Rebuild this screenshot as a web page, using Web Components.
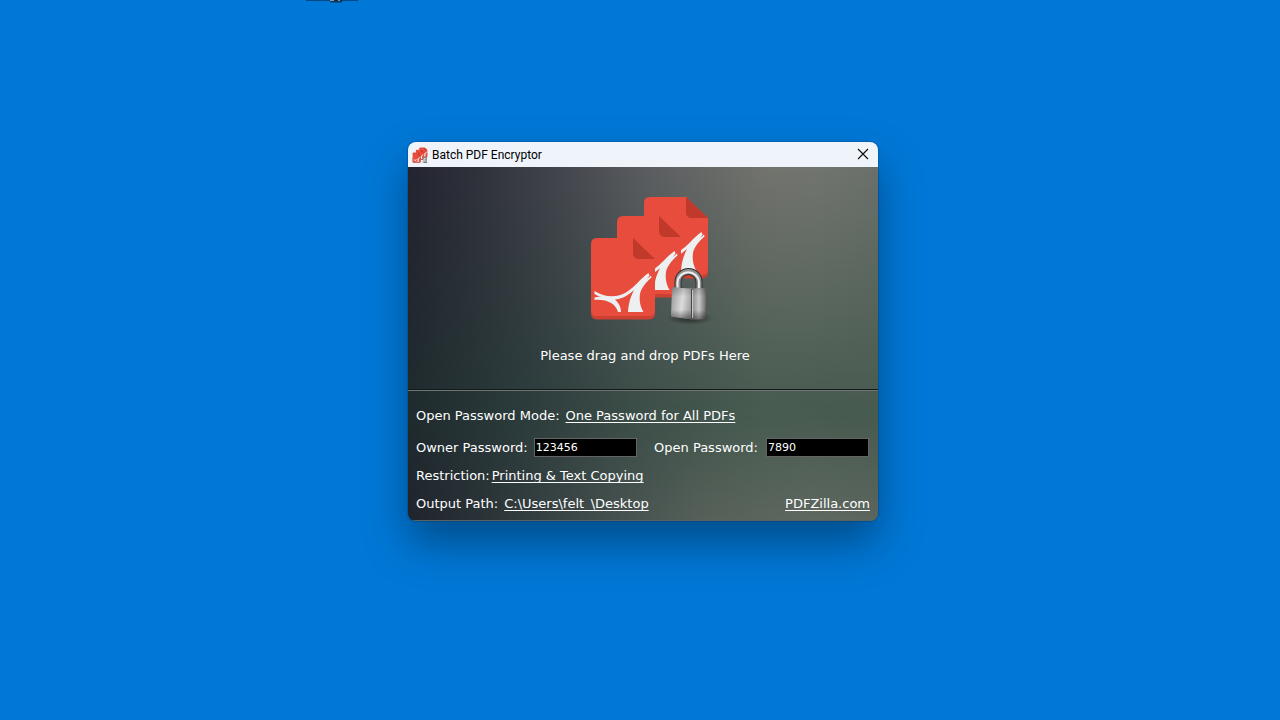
<!DOCTYPE html>
<html lang="en">
<head>
<meta charset="utf-8">
<title>Batch PDF Encryptor</title>
<style>
  html, body { margin: 0; height: 100%; }
  body { background: #0078d7; font-family: "DejaVu Sans", Verdana, sans-serif; font-size: 13px; }
</style>
</head>
<body>
<desk-top>
  <app-window caption="Batch PDF Encryptor">
    <drop-zone>Please drag and drop PDFs Here</drop-zone>
    <encrypt-form></encrypt-form>
  </app-window>
</desk-top>

<script>
const define = (name, html, setup) => {
  const template = document.createElement('template');
  template.innerHTML = html;
  customElements.define(name, class extends HTMLElement {
    constructor() {
      super();
      this.attachShadow({ mode: 'open' }).append(template.content.cloneNode(true));
    }
    connectedCallback() { if (setup) setup(this, this.shadowRoot); }
  });
};

/* Three stacked PDF pages with a padlock */
define('pdf-lock-icon', `
<style>
  :host { display: block; }
  svg { display: block; width: 100%; height: 100%; }
</style>
<svg viewBox="0 0 140 144" aria-hidden="true">
  <defs>
    <linearGradient id="left" x1="0" x2="1" y1="0" y2="0.2">
      <stop offset="0" stop-color="#8a8a8a"/><stop offset="0.15" stop-color="#a9a9a9"/>
      <stop offset="0.6" stop-color="#dcdcdc"/><stop offset="1" stop-color="#a4a4a4"/>
    </linearGradient>
    <linearGradient id="right" x1="0" x2="1" y1="0" y2="0">
      <stop offset="0" stop-color="#8c8c8c"/><stop offset="0.5" stop-color="#c8c8c8"/>
      <stop offset="1" stop-color="#6a6a6a"/>
    </linearGradient>
    <linearGradient id="shade" x1="0" x2="0" y1="0" y2="1">
      <stop offset="0" stop-color="#000" stop-opacity="0.2"/><stop offset="0.3" stop-color="#000" stop-opacity="0"/>
      <stop offset="0.7" stop-color="#000" stop-opacity="0"/><stop offset="1" stop-color="#000" stop-opacity="0.45"/>
    </linearGradient>
    <radialGradient id="ground">
      <stop offset="0" stop-color="#000" stop-opacity="0.55"/><stop offset="1" stop-color="#000" stop-opacity="0"/>
    </radialGradient>
    <g id="page">
      <path fill="#cb4033" d="M0 40H64V75Q64 81.500 58 81.500H6Q0 81.500 0 75Z"/>
      <path fill="#e84c3d" d="M6 0H42L64 21V72Q64 78 58 78H6Q0 78 0 72V6Q0 0 6 0Z"/>
      <path fill="#c0392b" d="M42 0L64 21H48Q42 21 42 15Z"/>
      <path fill="#ecf0f1" d="M3.500 53C14 60 27 59.500 35 54.500C44 49 49 41 57.500 35L58.500 37.500L56 41L60 37.500L60.500 39.500C54 45 50 51 49 56C48 63 49.500 69 52.500 74H37C37.500 66 39 60 43 52C37 57.500 31 61 24 61.500C28 65 30 69 30 74H27C25 66 16 61 3.500 62V59.500Q8 58 12 59.500Q7 58.500 3.500 56Z"/>
    </g>
  </defs>
  <use href="#page" x="64" y="11"/>
  <use href="#page" x="37" y="30"/>
  <use href="#page" x="11" y="52"/>
  <ellipse cx="110" cy="132" rx="24" ry="7" fill="url(#ground)"/>
  <path fill="none" stroke="#303030" stroke-width="7" d="M98 104V96A10.500 10.500 0 0 1 119 96V104"/>
  <path fill="none" stroke="#929292" stroke-width="5" d="M98 104V96A10.500 10.500 0 0 1 119 96V104"/>
  <path fill="none" stroke="#eeeeee" stroke-width="2" d="M97.500 102V96A10.800 10.800 0 0 1 119 96V102"/>
  <path fill="url(#left)" d="M92 101Q101 102 112 102.500V133.500Q101 132 91 130.500Z"/>
  <path fill="url(#right)" d="M112 102.500L126 102L125.500 133L112 133.500Z"/>
  <path fill="url(#shade)" d="M92 101L112 102.500L126 102L125.500 133L112 133.500L91 130.500Z"/>
  <path stroke="#454545" stroke-width="1" d="M111.500 103V133"/>
  <path stroke="#e4e4e4" stroke-width="1" opacity="0.7" d="M112.500 104V132"/>
</svg>`);

define('title-bar', `
<style>
  :host { display: flex; align-items: center; gap: 3px; height: 25px; padding: 0 4px 0 3px; background: #eff4fb; color: #000;
    font: 12px Roboto, "Open Sans", sans-serif; }
  pdf-lock-icon { width: 18px; height: 18px; }
  .caption { flex: 1; }
  button { display: grid; place-items: center; width: 22px; height: 24px; padding: 0 0 2px; border: 0; background: none; }
</style>
<pdf-lock-icon></pdf-lock-icon>
<span class="caption"><slot></slot></span>
<button aria-label="Close"><svg width="12" height="12" viewBox="0 0 12 12"><path d="M1 1L11 11M11 1L1 11" stroke="#111" stroke-width="1.200" fill="none"/></svg></button>`);

/* The backdrop blends three horizontal colour bands: top, middle and bottom */
define('app-window', `
<style>
  :host { display: block; box-sizing: border-box; overflow: hidden; border-radius: 8px; color: #fff;
    box-shadow: 0 0 1px 1px rgba(0,40,80,.25), 0 22px 44px rgba(0,0,0,.36); }
  .body { position: relative; isolation: isolate;
    background: linear-gradient(90deg, #1f2b2e 0%, #2c3c3c 25%, #3c4e48 48%, #485c51 75%, #485b50 100%); }
  .body::before, .body::after { content: ""; position: absolute; inset: 0; z-index: -1; }
  .body::before { background: linear-gradient(90deg, #23242f 0%, #30323b 15%, #43454d 32%, #5c5e61 52%, #72736d 76%, #72756f 86%, #6a706b 100%);
    mask-image: linear-gradient(#000, transparent 68%); }
  .body::after { background: linear-gradient(90deg, #20242d 0%, #2c3539 18%, #444f4e 43%, #566059 62%, #5f6860 86%, #5b655d 100%);
    mask-image: linear-gradient(transparent 70%, #000); box-shadow: inset 0 -1px #59635f; }
</style>
<title-bar></title-bar>
<div class="body"><slot></slot></div>`,
(host, root) => { root.querySelector('title-bar').textContent = host.getAttribute('caption'); });

define('drop-zone', `
<style>
  :host { display: flex; flex-direction: column; align-items: center; padding: 19px 0 23px 4px;
    border-bottom: 1px solid #141a1a; line-height: 20px; }
  pdf-lock-icon { width: 140px; height: 144px; margin: 0 0 16px 10px; }
</style>
<pdf-lock-icon></pdf-lock-icon>
<span><slot></slot></span>`);

define('form-row', `
<style>
  :host { display: flex; align-items: flex-start; gap: 6px; min-height: 20px; line-height: 20px; white-space: nowrap; }
  :host([tight]) { gap: 2px; }
</style>
<slot></slot>`);

define('encrypt-form', `
<style>
  :host { display: flex; flex-direction: column; gap: 8px; padding: 15px 8px 7px; border-top: 1px solid #6b7672; }
  form-row:first-of-type { margin-bottom: 4px; }
  a { color: inherit; text-underline-offset: 2px; text-decoration-skip-ink: none; }
  .end { margin-left: auto; }
  .open { display: flex; gap: 8px; margin-left: auto; }
  input { box-sizing: border-box; width: 103px; height: 19px; padding: 0 1px 1px; border: 1px solid #646464;
    background: #000; color: #fff; font: 11px "DejaVu Sans", Verdana, sans-serif; }
  .open input { margin-right: 1px; }
</style>
<form-row><span>Open Password Mode:</span><a href="#mode">One Password for All PDFs</a></form-row>
<form-row>
  <label for="owner">Owner Password:</label><input id="owner" value="123456">
  <div class="open"><label for="open">Open Password:</label><input id="open" value="7890"></div>
</form-row>
<form-row tight><span>Restriction:</span><a href="#restriction">Printing &amp; Text Copying</a></form-row>
<form-row><span>Output Path:</span><a href="#output">C:\\Users\\felt_\\Desktop</a><a class="end" href="#site">PDFZilla.com</a></form-row>`);

define('desk-top', `
<style>
  :host { display: block; position: relative; min-height: 100vh; overflow: hidden; background: #0078d7; }
  ::slotted(app-window) { position: absolute; left: 408px; top: 142px; width: 470px; }
  /* lower edge of a shortcut label that runs off the screen */
  svg { position: absolute; left: 304px; top: 0; }
</style>
<svg width="56" height="4" aria-hidden="true">
  <path d="M2 0H54" stroke="#00345f" stroke-width="2" opacity="0.7"/>
  <path d="M26 1H38" stroke="#102a44" stroke-width="3" opacity="0.8"/>
  <path d="M27 0V1M29 0V1M35 0V1" stroke="#fff" stroke-width="1"/>
</svg>
<slot></slot>`);
</script>
</body>
</html>
